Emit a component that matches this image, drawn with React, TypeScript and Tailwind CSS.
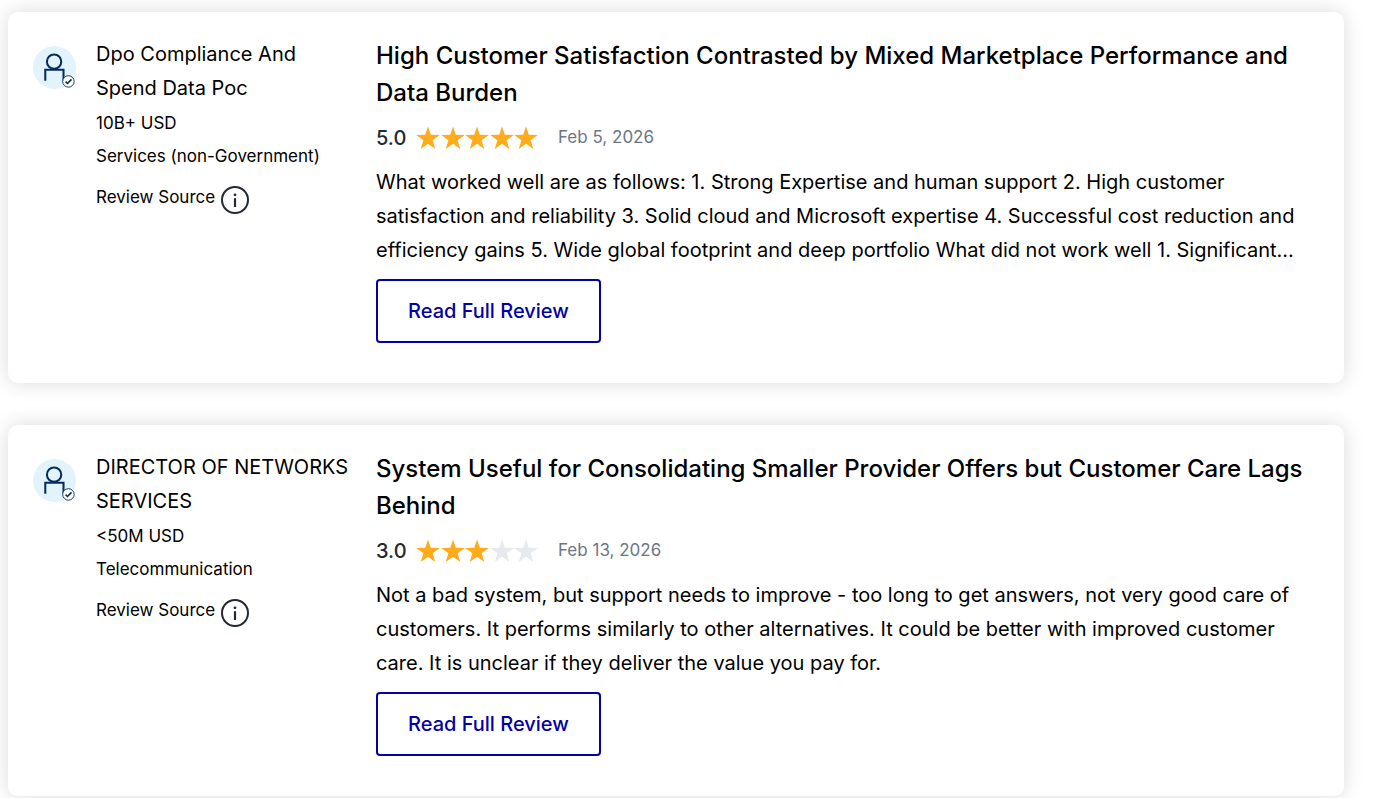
import React from 'react';

interface Review {
  id: string;
  role: string;
  companySize: string;
  industry: string;
  title: string;
  rating: number;
  date: string;
  summary: string;
}

const reviews: Review[] = [
  {
    id: 'review-1',
    role: 'Dpo Compliance And Spend Data Poc',
    companySize: '10B+ USD',
    industry: 'Services (non-Government)',
    title: 'High Customer Satisfaction Contrasted by Mixed Marketplace Performance and Data Burden',
    rating: 5,
    date: 'Feb 5, 2026',
    summary:
      'What worked well are as follows: 1. Strong Expertise and human support 2. High customer satisfaction and reliability 3. Solid cloud and Microsoft expertise 4. Successful cost reduction and efficiency gains 5. Wide global footprint and deep portfolio What did not work well 1. Significant...',
  },
  {
    id: 'review-2',
    role: 'DIRECTOR OF NETWORKS SERVICES',
    companySize: '<50M USD',
    industry: 'Telecommunication',
    title: 'System Useful for Consolidating Smaller Provider Offers but Customer Care Lags Behind',
    rating: 3,
    date: 'Feb 13, 2026',
    summary:
      'Not a bad system, but support needs to improve - too long to get answers, not very good care of customers. It performs similarly to other alternatives. It could be better with improved customer care. It is unclear if they deliver the value you pay for.',
  },
];

function Avatar() {
  return (
    <svg viewBox="0 0 42 42" className="w-[43px] h-[43px] shrink-0 overflow-visible" fill="none" aria-hidden="true">
      <circle cx="21" cy="21" r="21" fill="#e2f3fb" />
      <circle cx="20.6" cy="15.3" r="7" stroke="#052d5c" strokeWidth="2" />
      <path d="M12 34V23.2h17.8V34" stroke="#052d5c" strokeWidth="2" />
      <circle cx="34.6" cy="34.6" r="5.6" fill="#fff" stroke="#052d5c" strokeWidth="0.9" />
      <path d="M31.8 34.8l1.9 1.8 3.9-4" stroke="#052d5c" strokeWidth="1.5" />
    </svg>
  );
}

function InfoIcon() {
  return (
    <svg viewBox="0 0 28 28" className="w-7 h-7" fill="none" aria-hidden="true">
      <circle cx="14" cy="14" r="13" stroke="#212934" strokeWidth="2" />
      <path d="M14 12.2v8.8" stroke="#212934" strokeWidth="2.2" />
      <circle cx="14" cy="8.8" r="1.4" fill="#212934" />
    </svg>
  );
}

function Stars({ rating }: { rating: number }) {
  return (
    <div className="flex w-[122px] justify-between" role="img" aria-label={`${rating} out of 5 stars`}>
      {[1, 2, 3, 4, 5].map((n) => (
        <svg
          key={n}
          viewBox="0 0 24 24"
          className={`w-6 h-6 overflow-visible ${n <= rating ? 'text-[#ffab1a]' : 'text-[#e6e9ee]'}`}
          fill="currentColor"
        >
          <path d="M12 0.5l2.8 8.3 9 0.1-7.2 5.3 2.7 8.9L12 17.8l-7.3 5.3 2.7-8.9L0.2 8.9l9-0.1z" />
        </svg>
      ))}
    </div>
  );
}

function ReviewCard({ review }: { review: Review }) {
  return (
    <article className="flex rounded-[10px] bg-white pt-[25px] pb-10 pl-[25px] pr-10 shadow-[0_0_20px_rgba(0,0,0,0.15)]">
      <div className="flex w-[343px] shrink-0 gap-5 pr-6">
        <div className="pt-[9px]">
          <Avatar />
        </div>
        <div className="text-[17px] leading-[33px]">
          <p className="text-xl leading-[34px]">{review.role}</p>
          <p className="mt-0.5">{review.companySize}</p>
          <p>{review.industry}</p>
          <div className="mt-2 flex gap-1.5">
            <span>Review Source</span>
            <button type="button" aria-label="About the review source" className="mt-1 cursor-pointer">
              <InfoIcon />
            </button>
          </div>
        </div>
      </div>
      <div className="min-w-0 flex-1">
        <h3 className="text-2xl font-medium leading-[37px]">{review.title}</h3>
        <div className="mt-2 flex h-[38px] items-center">
          <span className="w-10 text-xl font-medium text-[#212934]">{review.rating.toFixed(1)}</span>
          <Stars rating={review.rating} />
          <span className="ml-5 text-[17px] text-[#6b7785]">{review.date}</span>
        </div>
        <p className="mt-2 text-xl leading-[34px]">{review.summary}</p>
        <button
          type="button"
          className="mt-3 h-16 cursor-pointer rounded border-2 border-[#0202a4] px-[30px] text-xl font-medium text-[#0202a4]"
        >
          Read Full Review
        </button>
      </div>
    </article>
  );
}

export default function App() {
  return (
    <main className="flex flex-col gap-[42px] bg-white pt-3 pb-0.5 pl-2 pr-[37px] font-['Inter',sans-serif] text-black">
      {reviews.map((review) => (
        <ReviewCard key={review.id} review={review} />
      ))}
    </main>
  );
}
